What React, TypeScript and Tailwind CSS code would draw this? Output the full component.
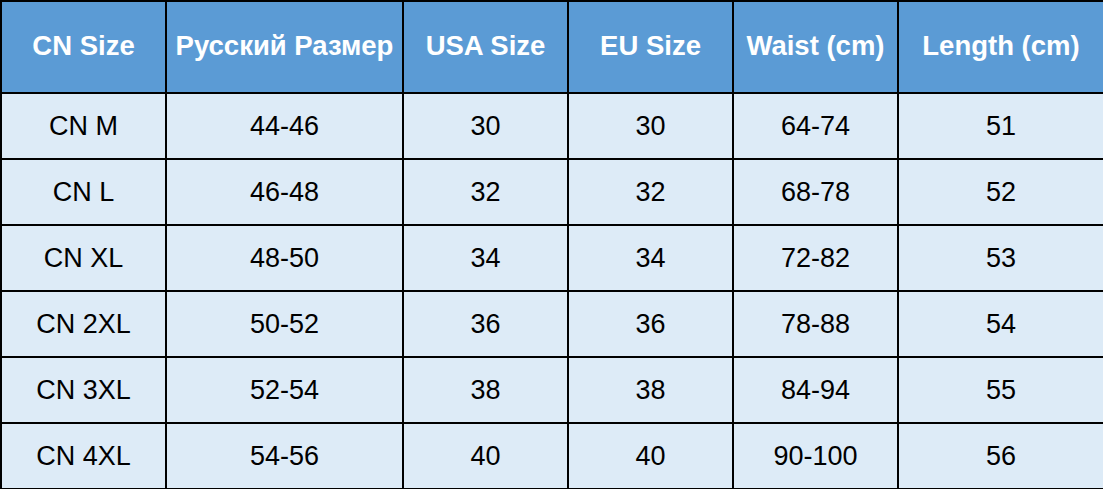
const headers = ["CN Size", "Русский Размер", "USA Size", "EU Size", "Waist (cm)", "Length (cm)"];

const rows = [
	["CN M", "44-46", "30", "30", "64-74", "51"],
	["CN L", "46-48", "32", "32", "68-78", "52"],
	["CN XL", "48-50", "34", "34", "72-82", "53"],
	["CN 2XL", "50-52", "36", "36", "78-88", "54"],
	["CN 3XL", "52-54", "38", "38", "84-94", "55"],
	["CN 4XL", "54-56", "40", "40", "90-100", "56"],
];

const widths = ["w-[165px]", "w-[237px]", "w-[165px]", "w-[165px]", "w-[165px]", "w-[206px]"];

export default function App() {
	return (
		<div className="w-[1103px] h-[489px] bg-white font-['Liberation_Sans',Arial,sans-serif]">
			<table className="w-[1103px] h-[489px] table-fixed border-collapse border-2 border-black">
				<colgroup>
					{widths.map((w, i) => (
						<col key={i} className={w} />
					))}
				</colgroup>
				<thead>
					<tr className="h-[92px] bg-[#5b9bd5]">
						{headers.map((h) => (
							<th key={h} className="border-2 border-black text-white text-[27.5px] font-bold text-center align-middle pb-[2px] whitespace-nowrap">
								{h}
							</th>
						))}
					</tr>
				</thead>
				<tbody>
					{rows.map((r) => (
						<tr key={r[0]} className="h-[66px] bg-[#ddebf7]">
							{r.map((c, i) => (
								<td key={i} className="border-2 border-black text-black text-[27px] text-center align-middle">
									{c}
								</td>
							))}
						</tr>
					))}
				</tbody>
			</table>
		</div>
	);
}
